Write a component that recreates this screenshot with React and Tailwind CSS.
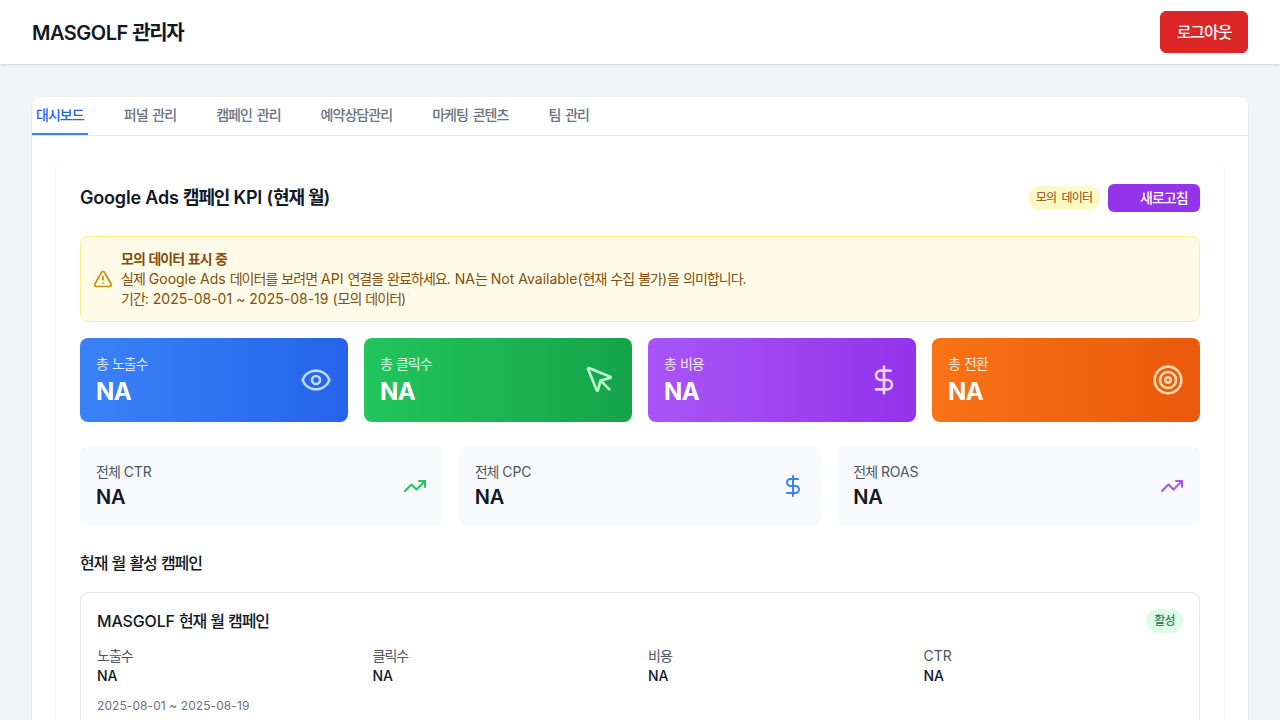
import React from "react";
import { Eye, MousePointer, DollarSign, Target, TrendingUp, TriangleAlert } from "lucide-react";

const tabs = ["대시보드", "퍼널 관리", "캠페인 관리", "예약상담관리", "마케팅 콘텐츠", "팀 관리"];

// The Hangul in the picture is set slightly tighter than the installed font.
function H({ children }) {
  return children.split(/([가-힣]+)/).map((part, i) =>
    i % 2 === 1 ? <span key={i} className="tracking-[-0.068em]">{part}</span> : part
  );
}

function Tab({ label, active }) {
  return (
    <button className={active ? "px-1 h-[38px] border-b-2 border-[#3b82f6] text-sm font-medium text-[#2563eb] [word-spacing:1px]" : "px-1 h-[38px] border-b-2 border-transparent text-sm font-medium text-[#6b7280] [word-spacing:1px]"}>
      <H>{label}</H>
    </button>
  );
}

function Kpi({ label, gradient, labelColor, iconColor, Icon }) {
  return (
    <div className={"rounded-lg p-4 flex items-center justify-between text-white bg-linear-to-r/srgb " + gradient}>
      <div>
        <p className={"text-sm " + labelColor}><H>{label}</H></p>
        <p className="text-2xl font-bold tracking-tight pt-[3px] leading-[29px]">NA</p>
      </div>
      <Icon className={"w-8 h-8 " + iconColor} />
    </div>
  );
}

function Mini({ label, color, Icon }) {
  return (
    <div className="rounded-lg p-4 bg-[#f9fafb] flex items-center justify-between">
      <div>
        <p className="text-sm text-[#4b5563] tracking-[-0.01em]"><H>{label}</H></p>
        <p className="text-xl font-semibold text-[#111827] tracking-[-0.01em] pt-[2px] leading-[26px]">NA</p>
      </div>
      <Icon className={"w-6 h-6 " + color} />
    </div>
  );
}

function Metric({ label }) {
  return (
    <div>
      <p className="text-sm text-[#4b5563]"><H>{label}</H></p>
      <p className="text-sm font-medium text-[#111827]">NA</p>
    </div>
  );
}

export default function App() {
  return (
    <div className="min-h-screen bg-[#f3f4f6] font-['Inter','Noto_Sans_CJK_KR',sans-serif]">
      <header className="bg-white shadow-sm h-[64px] px-8 flex items-center justify-between">
        <h1 className="text-xl font-semibold text-[#111827] tracking-tight pt-px"><H>MASGOLF 관리자</H></h1>
        <button className="w-[88px] py-2 border border-[#dc2626] bg-[#dc2626] rounded-md text-base font-medium text-white"><H>로그아웃</H></button>
      </header>
      <main className="px-8 pt-[33px] pb-8">
        <div className="bg-white rounded-lg shadow-sm">
          <nav className="flex gap-8 border-b border-[#e5e7eb] h-[39px]">
            {tabs.map((t, i) => <Tab key={t} label={t} active={i === 0} />)}
          </nav>
          <div className="p-6">
            <section className="bg-white rounded-lg shadow-sm p-6">
              <div className="flex items-center justify-between mb-6">
                <h2 className="text-lg font-semibold text-[#111827] tracking-[-0.01em]"><H>Google Ads 캠페인 KPI (현재 월)</H></h2>
                <div className="flex items-center gap-2">
                  <span className="w-[72px] text-center py-1 rounded-full bg-[#fef9c3] text-xs text-[#854d0e] [word-spacing:2px]"><H>모의 데이터</H></span>
                  <button className="flex items-center w-[92px] px-3 py-1 rounded-md bg-[#9333ea] text-sm font-medium text-white">
                    <span className="w-4 h-4 mr-1" />
                    <H>새로고침</H>
                  </button>
                </div>
              </div>
              <div className="flex items-center gap-2 p-3 mb-4 rounded-lg border border-[#fef08a] bg-[#fefce8]">
                <TriangleAlert className="w-5 h-5 text-[#ca8a04]" />
                <div className="text-sm text-[#854d0e]">
                  <p className="font-semibold"><H>모의 데이터 표시 중</H></p>
                  <p><H>실제 Google Ads 데이터를 보려면 API 연결을 완료하세요. NA는 Not Available(현재 수집 불가)을 의미합니다.</H></p>
                  <p><H>기간: 2025-08-01 ~ 2025-08-19 (모의 데이터)</H></p>
                </div>
              </div>
              <div className="grid grid-cols-4 gap-4 mb-6">
                <Kpi label="총 노출수" gradient="from-[#3b82f6] to-[#2563eb]" labelColor="text-[#dbeafe]" iconColor="text-[#bfdbfe]" Icon={Eye} />
                <Kpi label="총 클릭수" gradient="from-[#22c55e] to-[#16a34a]" labelColor="text-[#dcfce7]" iconColor="text-[#bbf7d0]" Icon={MousePointer} />
                <Kpi label="총 비용" gradient="from-[#a855f7] to-[#9333ea]" labelColor="text-[#f3e8ff]" iconColor="text-[#e9d5ff]" Icon={DollarSign} />
                <Kpi label="총 전환" gradient="from-[#f97316] to-[#ea580c]" labelColor="text-[#ffedd5]" iconColor="text-[#fed7aa]" Icon={Target} />
              </div>
              <div className="grid grid-cols-3 gap-4 mb-6">
                <Mini label="전체 CTR" color="text-[#22c55e]" Icon={TrendingUp} />
                <Mini label="전체 CPC" color="text-[#3b82f6]" Icon={DollarSign} />
                <Mini label="전체 ROAS" color="text-[#a855f7]" Icon={TrendingUp} />
              </div>
              <h3 className="text-base leading-[26px] font-medium text-[#111827] mb-4"><H>현재 월 활성 캠페인</H></h3>
              <div className="rounded-lg border border-[#e5e7eb] p-4">
                <div className="flex items-center justify-between mb-[13px]">
                  <h4 className="text-base font-medium text-[#111827] tracking-[-0.01em]"><H>MASGOLF 현재 월 캠페인</H></h4>
                  <span className="w-[37px] text-center py-1 rounded-full bg-[#dcfce7] text-xs text-[#166534]"><H>활성</H></span>
                </div>
                <div className="grid grid-cols-4 gap-4">
                  <Metric label="노출수" />
                  <Metric label="클릭수" />
                  <Metric label="비용" />
                  <Metric label="CTR" />
                </div>
                <p className="mt-3 text-xs text-[#6b7280] tracking-[0.007em]">2025-08-01 ~ 2025-08-19</p>
              </div>
            </section>
          </div>
        </div>
      </main>
    </div>
  );
}
